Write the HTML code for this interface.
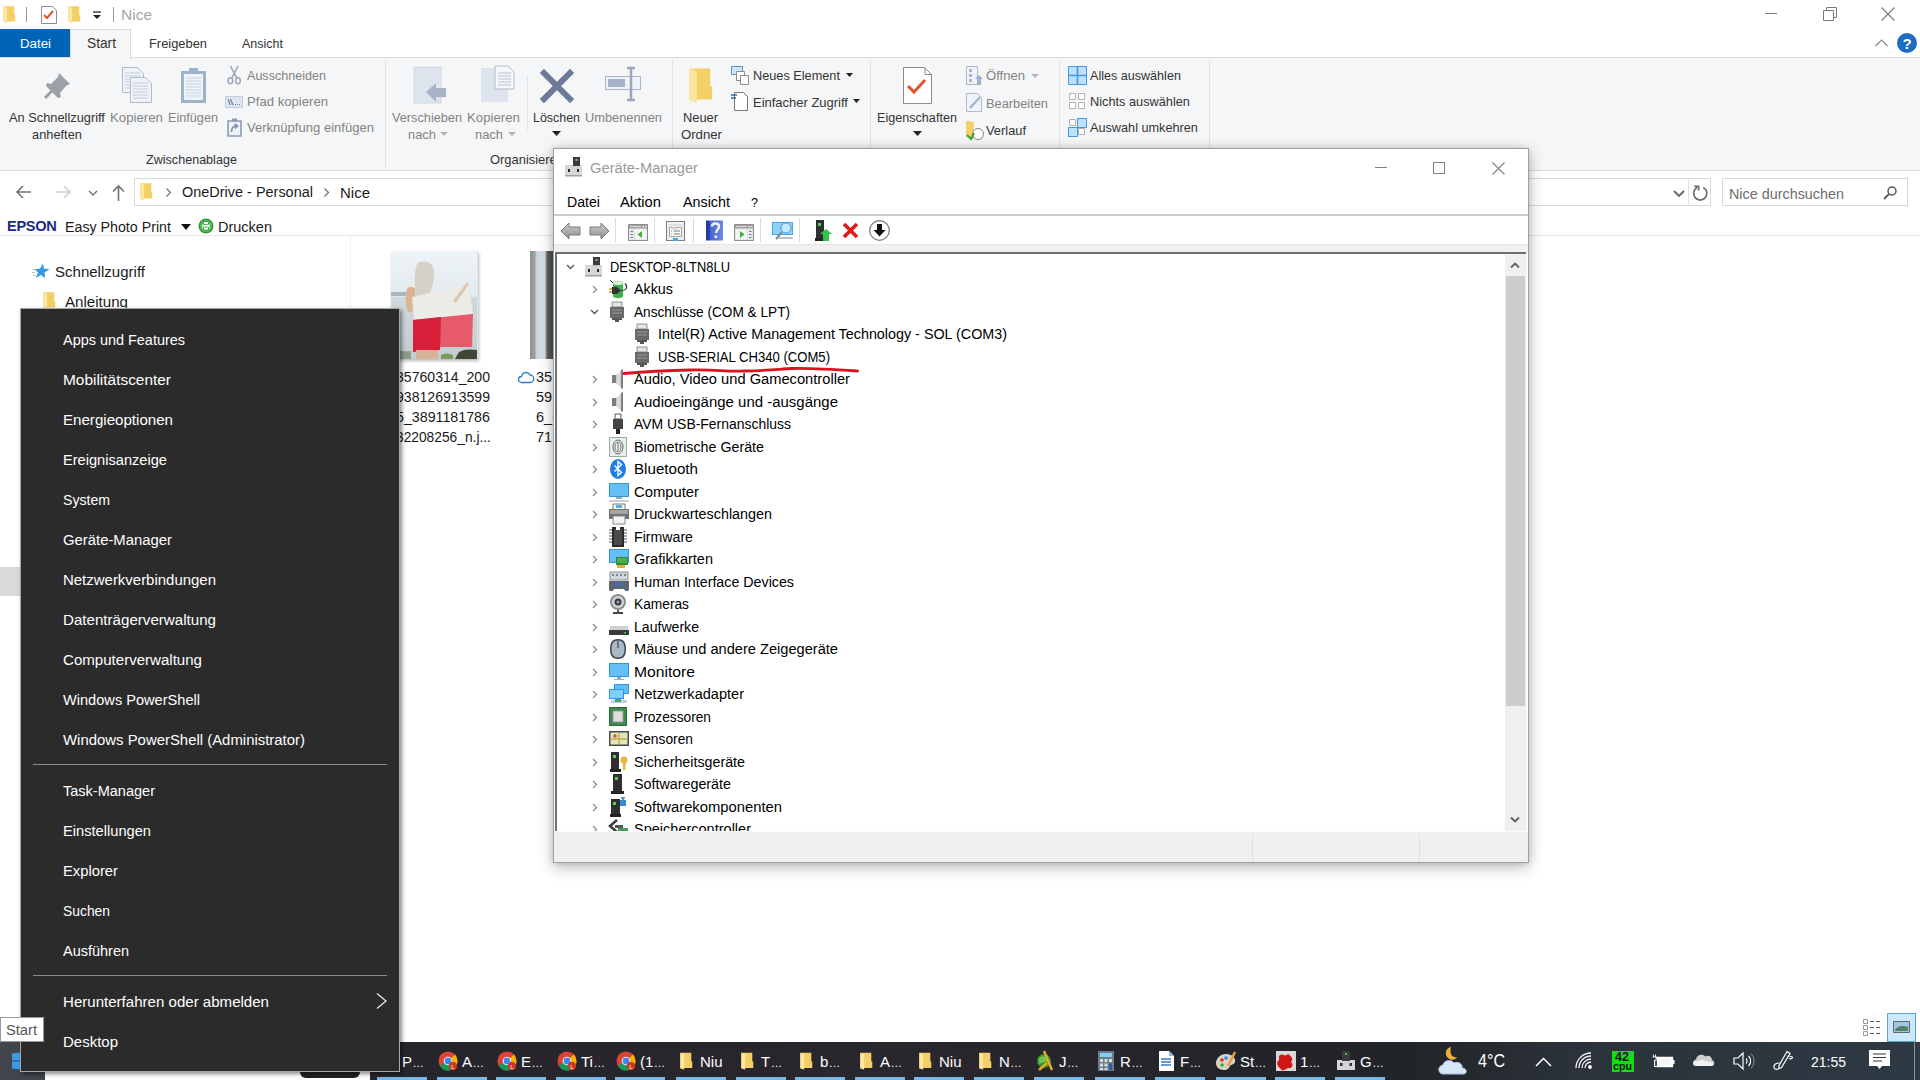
<!DOCTYPE html>
<html><head><meta charset="utf-8">
<style>
*{margin:0;padding:0;box-sizing:border-box}
html,body{width:1920px;height:1080px;overflow:hidden;background:#fff;font-family:"Liberation Sans",sans-serif;color:#000}
.a{position:absolute}
.t{position:absolute;white-space:nowrap;line-height:1}
svg.i{position:absolute;overflow:visible}
</style></head><body>

<div id="explorer"><svg class="i" style="left:3px;top:6px;" width="13" height="17" viewBox="0 0 13 17"><path d="M0.3 0.3h11v8.7h1v6.5h-8.5v1.5l-3.5-1.3z" fill="#f3cf67"/><path d="M0.3 0.3l3.9 1.3v15.4l-3.9-1.3z" fill="#fde6a0"/></svg>
<div class="a" style="left:26px;top:7px;width:1px;height:15px;background:#9a9a9a;"></div>
<svg class="i" style="left:41px;top:6px;" width="16" height="18" viewBox="0 0 16 18"><path d="M0.5 0.5h11l4 4v13h-15z" fill="#fff" stroke="#8c8c8c"/><path d="M3 9l3 3 6-7" fill="none" stroke="#e0552b" stroke-width="2"/></svg>
<svg class="i" style="left:68px;top:6px;" width="13" height="17" viewBox="0 0 13 17"><path d="M0.3 0.3h11v8.7h1v6.5h-8.5v1.5l-3.5-1.3z" fill="#f3cf67"/><path d="M0.3 0.3l3.9 1.3v15.4l-3.9-1.3z" fill="#fde6a0"/></svg>
<svg class="i" style="left:92px;top:11px;" width="10" height="9" viewBox="0 0 10 9"><path d="M1 1h8" stroke="#222" stroke-width="1.3"/><path d="M1 4h8l-4 4z" fill="#222"/></svg>
<div class="a" style="left:113px;top:7px;width:1px;height:15px;background:#9a9a9a;"></div>
<div class="t" style="left:121.0px;top:7.00px;font-size:15.50px;color:#a6a6a6;">Nice</div>
<div class="a" style="left:1765px;top:13px;width:12px;height:1px;background:#7a7a7a;"></div>
<svg class="i" style="left:1823px;top:7px;" width="14" height="14" viewBox="0 0 14 14"><path d="M0.5 3.5h10v10h-10z" fill="none" stroke="#7a7a7a"/><path d="M3.5 3.5v-3h10v10h-3" fill="none" stroke="#7a7a7a"/></svg>
<svg class="i" style="left:1881px;top:7px;" width="14" height="14" viewBox="0 0 14 14"><path d="M0.5 0.5l13 13M13.5 0.5l-13 13" stroke="#7a7a7a" stroke-width="1.1"/></svg>
<div class="a" style="left:0px;top:57px;width:1920px;height:114px;background:#f5f6f7;border-top:1px solid #dadbdc;border-bottom:1px solid #dadbdc"></div>
<div class="a" style="left:0px;top:29px;width:70px;height:28px;background:#0064b4;"></div>
<div class="t" style="left:20.0px;top:37.00px;font-size:13.28px;color:#fff;">Datei</div>
<div class="a" style="left:70px;top:29px;width:61px;height:30px;background:#f5f6f7;border:1px solid #dadbdc;border-bottom:none"></div>
<div class="t" style="left:87.0px;top:37.00px;font-size:13.73px;color:#333;">Start</div>
<div class="t" style="left:149.0px;top:38.00px;font-size:12.88px;color:#333;">Freigeben</div>
<div class="t" style="left:242.0px;top:38.00px;font-size:12.50px;color:#333;">Ansicht</div>
<svg class="i" style="left:1875px;top:39px;" width="13" height="8" viewBox="0 0 13 8"><path d="M0.5 7l6-6 6 6" fill="none" stroke="#888" stroke-width="1.2"/></svg>
<svg class="i" style="left:1897px;top:33px;" width="20" height="20" viewBox="0 0 20 20"><circle cx="10" cy="10" r="10" fill="#1a6cc4"/><text x="10" y="15.5" text-anchor="middle" font-family="Liberation Sans" font-weight="bold" font-size="15" fill="#fff">?</text></svg>
<svg class="i" style="left:43px;top:71px;" width="29" height="29" viewBox="0 0 29 29"><path d="M16 2 L27 13 L23 15 L17 22 L18 26 L15 27 L3 15 L4 12 L8 13 L15 6 Z" fill="#9aa1a8"/><path d="M9 20 L2 27" stroke="#9aa1a8" stroke-width="3"/></svg>
<div class="t" style="left:9.0px;top:112.00px;font-size:12.82px;color:#333;">An Schnellzugriff</div>
<div class="t" style="left:32.0px;top:129.00px;font-size:12.84px;color:#333;">anheften</div>
<svg class="i" style="left:122px;top:67px;" width="22" height="26" viewBox="0 0 22 26"><path d="M0.5 0.5h15l6 6v19h-21z" fill="#eef2f9" stroke="#b2bbc9"/><path d="M3 6h15" stroke="#c4cdd9"/><path d="M3 9h15" stroke="#c4cdd9"/><path d="M3 12h15" stroke="#c4cdd9"/><path d="M3 15h15" stroke="#c4cdd9"/><path d="M3 18h15" stroke="#c4cdd9"/><path d="M3 21h15" stroke="#c4cdd9"/></svg>
<svg class="i" style="left:130px;top:77px;" width="22" height="26" viewBox="0 0 22 26"><path d="M0.5 0.5h15l6 6v19h-21z" fill="#eef2f9" stroke="#b2bbc9"/><path d="M3 6h15" stroke="#c4cdd9"/><path d="M3 9h15" stroke="#c4cdd9"/><path d="M3 12h15" stroke="#c4cdd9"/><path d="M3 15h15" stroke="#c4cdd9"/><path d="M3 18h15" stroke="#c4cdd9"/><path d="M3 21h15" stroke="#c4cdd9"/></svg>
<div class="t" style="left:110.0px;top:111.00px;font-size:13.24px;color:#838383;">Kopieren</div>
<svg class="i" style="left:180px;top:66px;" width="27" height="38" viewBox="0 0 27 38"><path d="M1 5h25v32h-25z" fill="#9fb2cc"/><path d="M4 8h19v26h-19z" fill="#eef2f9"/><path d="M9 2h9v6h-9z" fill="#9fb2cc"/><path d="M6 12h15" stroke="#c8d2df"/><path d="M6 15h15" stroke="#c8d2df"/><path d="M6 18h15" stroke="#c8d2df"/><path d="M6 21h15" stroke="#c8d2df"/><path d="M6 24h15" stroke="#c8d2df"/><path d="M6 27h15" stroke="#c8d2df"/><path d="M6 30h15" stroke="#c8d2df"/></svg>
<div class="t" style="left:168.0px;top:112.00px;font-size:12.66px;color:#838383;">Einfügen</div>
<svg class="i" style="left:227px;top:65px;" width="15" height="20" viewBox="0 0 15 20"><path d="M3.5 1L10 13.5M11 1L4.5 13.5" stroke="#9ba6b8" stroke-width="1.6"/><ellipse cx="3.4" cy="15.8" rx="2.3" ry="3" fill="none" stroke="#9ba6b8" stroke-width="1.5"/><ellipse cx="11" cy="15.8" rx="2.3" ry="3" fill="none" stroke="#9ba6b8" stroke-width="1.5"/></svg>
<div class="t" style="left:247.0px;top:70.00px;font-size:12.57px;color:#838383;">Ausschneiden</div>
<svg class="i" style="left:225px;top:96px;" width="18" height="12" viewBox="0 0 18 12"><path d="M0.5 0.5h17v11h-17z" fill="#dfe6f0" stroke="#c2cbd8"/><path d="M3 3l2.5 6M5.5 3l2.5 6" stroke="#6b7a92" stroke-width="1.1"/><path d="M10 8.5h1M12 8.5h1M14 8.5h1" stroke="#6b7a92" stroke-width="1"/></svg>
<div class="t" style="left:247.0px;top:95.00px;font-size:13.13px;color:#838383;">Pfad kopieren</div>
<svg class="i" style="left:227px;top:117px;" width="15" height="20" viewBox="0 0 15 20"><path d="M1 4h13v15h-13z" fill="#eef2f9" stroke="#8d9cb4" stroke-width="1.6"/><path d="M5 1.5h5v3h-5z" fill="#8d9cb4"/><path d="M4.5 15c0-4 2-6 5-6M7.5 7l3 2-2.5 2.5" fill="none" stroke="#7c8ea8" stroke-width="1.6"/></svg>
<div class="t" style="left:247.0px;top:121.00px;font-size:13.05px;color:#838383;">Verknüpfung einfügen</div>
<div class="t" style="left:146.0px;top:154.00px;font-size:12.59px;color:#333;">Zwischenablage</div>
<div class="a" style="left:385px;top:60px;width:1px;height:108px;background:#e2e3e4;"></div>
<div class="a" style="left:672px;top:60px;width:1px;height:108px;background:#e2e3e4;"></div>
<div class="a" style="left:870px;top:60px;width:1px;height:108px;background:#e2e3e4;"></div>
<div class="a" style="left:1059px;top:60px;width:1px;height:108px;background:#e2e3e4;"></div>
<div class="a" style="left:1209px;top:60px;width:1px;height:108px;background:#e2e3e4;"></div>
<div class="a" style="left:527px;top:75px;width:1px;height:55px;background:#e2e3e4;"></div>
<svg class="i" style="left:414px;top:67px;" width="34" height="38" viewBox="0 0 34 38"><path d="M0 0h27v36h-27z" fill="#dde4ee" stroke="#c9d3e0" stroke-width="0.8"/><path d="M12 25 L22 16 L22 21 L32 21 L32 30 L22 30 L22 35Z" fill="#a7b4c6"/></svg>
<div class="t" style="left:392.0px;top:112.00px;font-size:12.72px;color:#838383;">Verschieben</div>
<div class="t" style="left:408.0px;top:129.00px;font-size:12.91px;color:#838383;">nach</div>
<svg class="i" style="left:440px;top:132px;" width="8" height="4" viewBox="0 0 8 4"><path d="M0 0h8l-4 4z" fill="#b5b5b5"/></svg>
<svg class="i" style="left:481px;top:66px;" width="34" height="36" viewBox="0 0 34 36"><path d="M0 2h27v34h-27z" fill="#dde4ee"/><path d="M14 0h13l6 6v17h-19z" fill="#f4f7fb" stroke="#b2bbc9"/><path d="M17 7h13" stroke="#b7c1cf"/><path d="M17 10h13" stroke="#b7c1cf"/><path d="M17 13h13" stroke="#b7c1cf"/><path d="M17 16h13" stroke="#b7c1cf"/><path d="M17 19h13" stroke="#b7c1cf"/></svg>
<div class="t" style="left:467.0px;top:111.00px;font-size:13.24px;color:#838383;">Kopieren</div>
<div class="t" style="left:475.0px;top:129.00px;font-size:12.91px;color:#838383;">nach</div>
<svg class="i" style="left:508px;top:132px;" width="8" height="4" viewBox="0 0 8 4"><path d="M0 0h8l-4 4z" fill="#b5b5b5"/></svg>
<svg class="i" style="left:541px;top:70px;" width="32" height="32" viewBox="0 0 32 32"><path d="M3 3 L29 29 M29 3 L3 29" stroke="#6b7a99" stroke-width="6" stroke-linecap="square"/></svg>
<div class="t" style="left:533.0px;top:112.00px;font-size:12.43px;color:#333;">Löschen</div>
<svg class="i" style="left:552px;top:131px;" width="9" height="5" viewBox="0 0 9 5"><path d="M0 0h9l-4.5 5z" fill="#222"/></svg>
<svg class="i" style="left:605px;top:67px;" width="38" height="34" viewBox="0 0 38 34"><path d="M0.5 9.5h35v13h-35z" fill="#eef2f9" stroke="#aab6c8"/><path d="M3 12h17v8h-17z" fill="#a3b2c8"/><path d="M22 1h8M26 1v32M22 33h8" fill="none" stroke="#97a6bd" stroke-width="2.5"/></svg>
<div class="t" style="left:585.0px;top:112.00px;font-size:12.82px;color:#838383;">Umbenennen</div>
<div class="t" style="left:490.0px;top:154.00px;font-size:12.93px;color:#333;">Organisieren</div>
<svg class="i" style="left:689px;top:68px;" width="24" height="35" viewBox="0 0 24 35"><g transform="scale(1.88,2.04)"><path d="M0.3 0.3h11v8.7h1v6.5h-8.5v1.5l-3.5-1.3z" fill="#f3cf67"/><path d="M0.3 0.3l3.9 1.3v15.4l-3.9-1.3z" fill="#fde6a0"/></g></svg>
<div class="t" style="left:683.0px;top:112.00px;font-size:12.85px;color:#333;">Neuer</div>
<div class="t" style="left:681.0px;top:128.00px;font-size:13.17px;color:#333;">Ordner</div>
<svg class="i" style="left:731px;top:66px;" width="18" height="19" viewBox="0 0 18 19"><path d="M0.5 0.5h11v8h-11z" fill="#cfe3f5" stroke="#5b8fc7"/><path d="M5.5 5.5h8v9h-8z" fill="#fff" stroke="#8c8c8c"/><path d="M9.5 9.5h8v9h-8z" fill="#fff" stroke="#8c8c8c"/></svg>
<div class="t" style="left:753.0px;top:70.00px;font-size:12.72px;color:#333;">Neues Element</div>
<svg class="i" style="left:846px;top:73px;" width="7" height="4" viewBox="0 0 7 4"><path d="M0 0h7l-3.5 4z" fill="#222"/></svg>
<svg class="i" style="left:731px;top:92px;" width="17" height="19" viewBox="0 0 17 19"><path d="M3.5 0.5h9l4 4v14h-13z" fill="#fff" stroke="#777"/><path d="M0 3h6M0 6h5" stroke="#2c6fb7" stroke-width="1.3"/></svg>
<div class="t" style="left:753.0px;top:96.00px;font-size:12.98px;color:#333;">Einfacher Zugriff</div>
<svg class="i" style="left:853px;top:99px;" width="7" height="4" viewBox="0 0 7 4"><path d="M0 0h7l-3.5 4z" fill="#222"/></svg>
<svg class="i" style="left:903px;top:67px;" width="29" height="37" viewBox="0 0 29 37"><path d="M0.5 0.5h21l7 7v29h-28z" fill="#fff" stroke="#8c8c8c"/><path d="M22 0.5v7h7" fill="none" stroke="#8c8c8c"/><path d="M5 19l6 6 11-12" fill="none" stroke="#e0552b" stroke-width="3"/></svg>
<div class="t" style="left:877.0px;top:112.00px;font-size:12.62px;color:#333;">Eigenschaften</div>
<svg class="i" style="left:913px;top:131px;" width="9" height="5" viewBox="0 0 9 5"><path d="M0 0h9l-4.5 5z" fill="#222"/></svg>
<svg class="i" style="left:966px;top:66px;" width="17" height="20" viewBox="0 0 17 20"><path d="M0.5 0.5h11v18h-11z" fill="#eef2f9" stroke="#a9b6c8"/><path d="M3 3h3v3h-3zM3 8h3v3h-3zM3 13h3v3h-3z" fill="#a9b6c8"/><path d="M13 9 L17 13 L15 13 L15 19 L11 19 L11 13 L9 13Z" fill="#9fb0c8"/></svg>
<div class="t" style="left:986.0px;top:69.00px;font-size:13.07px;color:#838383;">Öffnen</div>
<svg class="i" style="left:1031px;top:74px;" width="8" height="4" viewBox="0 0 8 4"><path d="M0 0h8l-4 4z" fill="#b5b5b5"/></svg>
<svg class="i" style="left:966px;top:93px;" width="17" height="19" viewBox="0 0 17 19"><path d="M0.5 0.5h11l4 4v14h-15z" fill="#eef2f9" stroke="#b2bbc9"/><path d="M4 15 L14 4" stroke="#9fb0c8" stroke-width="2"/></svg>
<div class="t" style="left:986.0px;top:98.00px;font-size:12.82px;color:#838383;">Bearbeiten</div>
<svg class="i" style="left:966px;top:121px;" width="18" height="20" viewBox="0 0 18 20"><path d="M0 0 L8 1 L8 18 L0 16Z" fill="#f3d06a"/><circle cx="12" cy="13" r="5.5" fill="#fff" stroke="#888"/><path d="M1 14 L5 18 L8 12" fill="none" stroke="#3aa33a" stroke-width="2"/></svg>
<div class="t" style="left:986.0px;top:125.00px;font-size:12.85px;color:#333;">Verlauf</div>
<svg class="i" style="left:1068px;top:66px;" width="19" height="19" viewBox="0 0 19 19"><path d="M0.5 0.5h18v18h-18z" fill="#bfe0f9" stroke="#3f9ae2"/><path d="M9.5 0.5v18M0.5 9.5h18" stroke="#3f9ae2" stroke-width="1.6"/></svg>
<div class="t" style="left:1090.0px;top:70.00px;font-size:12.59px;color:#333;">Alles auswählen</div>
<svg class="i" style="left:1069px;top:93px;" width="17" height="17" viewBox="0 0 17 17"><path d="M0.5 0.5h6v6h-6zM9.5 0.5h6v6h-6zM0.5 9.5h6v6h-6zM9.5 9.5h6v6h-6z" fill="#fff" stroke="#b0b0b0"/></svg>
<div class="t" style="left:1090.0px;top:96.00px;font-size:12.76px;color:#333;">Nichts auswählen</div>
<svg class="i" style="left:1068px;top:118px;" width="19" height="19" viewBox="0 0 19 19"><path d="M1.5 1.5h6v6h-6zM10.5 10.5h6v6h-6z" fill="#fff" stroke="#b0b0b0"/><path d="M9.5 0.5h9v9h-9zM0.5 9.5h9v9h-9z" fill="#bfe0f9" stroke="#3f9ae2"/></svg>
<div class="t" style="left:1090.0px;top:122.00px;font-size:12.70px;color:#333;">Auswahl umkehren</div>
<svg class="i" style="left:16px;top:185px;" width="16" height="14" viewBox="0 0 16 14"><path d="M15 7H1M7 1L1 7l6 6" fill="none" stroke="#737373" stroke-width="1.6"/></svg>
<svg class="i" style="left:55px;top:185px;" width="16" height="14" viewBox="0 0 16 14"><path d="M1 7h14M9 1l6 6-6 6" fill="none" stroke="#cfcfcf" stroke-width="1.6"/></svg>
<svg class="i" style="left:88px;top:190px;" width="10" height="6" viewBox="0 0 10 6"><path d="M1 1l4 4 4-4" fill="none" stroke="#707070" stroke-width="1.4"/></svg>
<svg class="i" style="left:112px;top:185px;" width="13" height="16" viewBox="0 0 13 16"><path d="M6.5 16V1M1 6.5l5.5-5.5 5.5 5.5" fill="none" stroke="#737373" stroke-width="1.6"/></svg>
<div class="a" style="left:134px;top:178px;width:1577px;height:28px;background:#fff;border:1px solid #d9d9d9"></div>
<svg class="i" style="left:140px;top:183px;" width="13" height="17" viewBox="0 0 13 17"><path d="M0.3 0.3h11v8.7h1v6.5h-8.5v1.5l-3.5-1.3z" fill="#f3cf67"/><path d="M0.3 0.3l3.9 1.3v15.4l-3.9-1.3z" fill="#fde6a0"/></svg>
<svg class="i" style="left:166px;top:188px;" width="5" height="9" viewBox="0 0 5 9"><path d="M0.5 0.5l4 4-4 4" fill="none" stroke="#707070" stroke-width="1.2"/></svg>
<div class="t" style="left:182.0px;top:185.00px;font-size:14.46px;color:#1a1a1a;">OneDrive - Personal</div>
<svg class="i" style="left:324px;top:188px;" width="5" height="9" viewBox="0 0 5 9"><path d="M0.5 0.5l4 4-4 4" fill="none" stroke="#707070" stroke-width="1.2"/></svg>
<div class="t" style="left:340.0px;top:185.00px;font-size:15.00px;color:#1a1a1a;">Nice</div>
<svg class="i" style="left:1673px;top:190px;" width="12" height="7" viewBox="0 0 12 7"><path d="M1 1l5 5 5-5" fill="none" stroke="#666" stroke-width="1.9"/></svg>
<div class="a" style="left:1688px;top:179px;width:1px;height:26px;background:#e3e3e3;"></div>
<svg class="i" style="left:1691px;top:184px;" width="18" height="18" viewBox="0 0 18 18"><path d="M12.3 3.6 A6.6 6.6 0 1 1 6.2 3.6" fill="none" stroke="#6b6b6b" stroke-width="1.7"/><path d="M3.2 2.3H7.6V6.6" fill="none" stroke="#6b6b6b" stroke-width="1.7"/></svg>
<div class="a" style="left:1722px;top:178px;width:186px;height:28px;background:#fff;border:1px solid #d9d9d9"></div>
<div class="t" style="left:1729.0px;top:187.00px;font-size:14.37px;color:#6d6d6d;">Nice durchsuchen</div>
<svg class="i" style="left:1883px;top:186px;" width="14" height="14" viewBox="0 0 14 14"><circle cx="9" cy="5" r="4" fill="none" stroke="#555" stroke-width="1.5"/><path d="M6 8L1 13" stroke="#555" stroke-width="1.8"/></svg>
<div class="t" style="left:7.0px;top:219.00px;font-size:14.57px;color:#1c2a87;font-weight:bold;letter-spacing:-0.3px">EPSON</div>
<div class="t" style="left:65.0px;top:220.00px;font-size:14.23px;color:#1a1a1a;">Easy Photo Print</div>
<svg class="i" style="left:181px;top:224px;" width="10" height="6" viewBox="0 0 10 6"><path d="M0 0h10l-5 6z" fill="#111"/></svg>
<svg class="i" style="left:198px;top:218px;" width="16" height="16" viewBox="0 0 16 16"><circle cx="8" cy="8" r="7.5" fill="#2e9b3a"/><circle cx="8" cy="8" r="6" fill="#54c35a"/><path d="M4.5 6h7v5h-7z" fill="#fff"/><path d="M5.5 3.5h5v3h-5zM5.5 9h5v3h-5z" fill="#fff" stroke="#2e9b3a" stroke-width="0.8"/></svg>
<div class="t" style="left:218.0px;top:220.00px;font-size:14.50px;color:#1a1a1a;">Drucken</div>
<div class="a" style="left:0px;top:235px;width:1920px;height:1px;background:#e5e5e5;"></div>
<div class="a" style="left:350px;top:236px;width:1px;height:806px;background:#f0f0f0;"></div>
<svg class="i" style="left:32px;top:263px;" width="20" height="17" viewBox="0 0 20 17"><path d="M10.94 0.50 L11.99 5.75 L17.55 6.03 L12.54 9.55 L13.04 14.97 L8.89 11.90 L3.63 14.97 L6.08 9.55 L2.34 6.03 L8.00 5.75Z" fill="#3a96e6"/><path d="M0.5 6.5h3M0 9.5h3M1 12.5h2.5" stroke="#8cc4f2" stroke-width="0.9"/></svg>
<div class="t" style="left:55.0px;top:264.00px;font-size:15.04px;color:#1a1a1a;">Schnellzugriff</div>
<svg class="i" style="left:43px;top:292px;" width="13" height="17" viewBox="0 0 13 17"><path d="M0.3 0.3h11v8.7h1v6.5h-8.5v1.5l-3.5-1.3z" fill="#f3cf67"/><path d="M0.3 0.3l3.9 1.3v15.4l-3.9-1.3z" fill="#fde6a0"/></svg>
<div class="t" style="left:65.0px;top:294.00px;font-size:15.11px;color:#1a1a1a;">Anleitung</div>
<div class="a" style="left:0px;top:567px;width:20px;height:29px;background:#d9d9d9;"></div>
<div class="a" style="left:391px;top:251px;width:87px;height:108px;background:#dce6eb;box-shadow:1px 2px 3px rgba(0,0,0,0.28)"></div>
<svg class="i" style="left:391px;top:251px;" width="86" height="108" viewBox="0 0 86 108"><defs><linearGradient id="sky" x1="0" y1="0" x2="0" y2="1"><stop offset="0" stop-color="#eef4f7"/><stop offset="0.42" stop-color="#e2eaee"/><stop offset="0.43" stop-color="#cfd9de"/><stop offset="1" stop-color="#c3cccf"/></linearGradient></defs><path d="M0 0h86v108h-86z" fill="url(#sky)"/><path d="M0 41h18v4h-18z" fill="#a9b9bf"/><path d="M16 38c2-3 6-3 8 0l1 22-8 1c-3-8-3-16-1-23z" fill="#d9b392"/><path d="M26 13c5-4 13-3 16 3 2 8 0 18-3 26l-14 3c-2-10-2-23 1-32z" fill="#d6d1c6"/><path d="M21 46 L78 34 L82 63 L23 69Z" fill="#ecebe6"/><path d="M62 50 L76 31 L78 33 L65 52Z" fill="#dcc6b2"/><path d="M23 69 L82 63 L81 96 L49 96 L22 99Z" fill="#e65a6c"/><path d="M22 69 L50 66 L49 99 L22 101Z" fill="#d81f3a"/><path d="M25 99h22v9h-22z" fill="#d8b296"/><path d="M68 101c5-3 11-3 18-2v9h-22z" fill="#3f4a36"/><path d="M50 104c4-2 8-2 12 0v4h-12z" fill="#7c9a5a"/><path d="M0 100c6-1 12 1 20 0v8h-20z" fill="#8e9a88"/></svg>
<div class="a" style="left:530px;top:251px;width:24px;height:108px;background:linear-gradient(90deg,#8c918f 0%,#9ea3a1 20%,#cdd6de 28%,#d6dee6 62%,#5d6163 72%,#4a4d4f 100%);"></div>
<div class="t" style="left:396.0px;top:370.00px;font-size:14.08px;color:#1a1a1a;">35760314_200</div>
<div class="t" style="left:536.0px;top:370.00px;font-size:14.50px;color:#1a1a1a;">35</div>
<div class="t" style="left:396.0px;top:390.00px;font-size:14.08px;color:#1a1a1a;">938126913599</div>
<div class="t" style="left:536.0px;top:390.00px;font-size:14.50px;color:#1a1a1a;">59</div>
<div class="t" style="left:396.0px;top:410.00px;font-size:14.24px;color:#1a1a1a;">5_3891181786</div>
<div class="t" style="left:536.0px;top:410.00px;font-size:14.50px;color:#1a1a1a;">6_6</div>
<div class="t" style="left:396.0px;top:431.00px;font-size:13.78px;color:#1a1a1a;">32208256_n.j...</div>
<div class="t" style="left:536.0px;top:430.00px;font-size:14.50px;color:#1a1a1a;">71</div>
<svg class="i" style="left:518px;top:371px;" width="15" height="12" viewBox="0 0 15 12"><path d="M3.5 11.5a3 3 0 0 1 0-6 4.5 4.5 0 0 1 8.5-1.5 3.5 3.5 0 0 1 0 7.5z" fill="none" stroke="#2a7ad2" stroke-width="1.3"/></svg>
<svg class="i" style="left:1863px;top:1019px;" width="18" height="17" viewBox="0 0 18 17"><path d="M0.5 0.5h4v4h-4zM0.5 6.5h4v4h-4zM0.5 12.5h4v4h-4z" fill="#fff" stroke="#999"/><path d="M7 2.5h4M13 2.5h4M7 8.5h4M13 8.5h4M7 14.5h4M13 14.5h4" stroke="#555"/></svg>
<div class="a" style="left:1887px;top:1013px;width:29px;height:29px;background:#cce8ff;border:1px solid #5aa5d8"></div>
<svg class="i" style="left:1893px;top:1021px;" width="17" height="12" viewBox="0 0 17 12"><path d="M0.5 0.5h16v11h-16z" fill="#9cc7df" stroke="#666"/><path d="M2 9c3-4 6-5 13-3v4h-13z" fill="#5b7f60"/></svg></div>
<div class="a" style="left:553px;top:148px;width:976px;height:715px;background:#fff;border:1px solid #a0a0a0;box-shadow:0 4px 14px rgba(0,0,0,0.28), 0 0 6px rgba(0,0,0,0.12)"></div>
<svg class="i" style="left:565px;top:157px;" width="18" height="20" viewBox="0 0 18 20"><path d="M0 8h17v11h-17z" fill="#d6d6d6"/><path d="M0 18h17v1.5h-17z" fill="#a0a0a0"/><path d="M3 12h2v3h-2zM12 12h2v3h-2z" fill="#2a2a2a"/><path d="M8 0h7v9h-7z" fill="#3b3b3b"/><path d="M10.5 2h2v2h-2z" fill="#7bc47b"/></svg>
<div class="t" style="left:590.0px;top:161.00px;font-size:14.72px;color:#9a9a9a;">Geräte-Manager</div>
<div class="a" style="left:1375px;top:167px;width:12px;height:1px;background:#808080;"></div>
<div class="a" style="left:1433px;top:162px;width:12px;height:12px;background:transparent;border:1px solid #808080"></div>
<svg class="i" style="left:1492px;top:162px;" width="13" height="13" viewBox="0 0 13 13"><path d="M0.5 0.5l12 12M12.5 0.5l-12 12" stroke="#808080" stroke-width="1.1"/></svg>
<div class="t" style="left:567.0px;top:195.00px;font-size:14.14px;color:#000;">Datei</div>
<div class="t" style="left:620.0px;top:195.00px;font-size:14.75px;color:#000;">Aktion</div>
<div class="t" style="left:683.0px;top:195.00px;font-size:14.33px;color:#000;">Ansicht</div>
<div class="t" style="left:751.0px;top:197.00px;font-size:12.59px;color:#000;">?</div>
<div class="a" style="left:554px;top:214px;width:974px;height:2px;background:#cdcdcd;"></div>
<div class="a" style="left:554px;top:244px;width:974px;height:8px;background:#f0f0f0;border-top:1px solid #e6e6e6"></div>
<svg class="i" style="left:560px;top:221px;" width="21" height="20" viewBox="0 0 21 20"><defs><linearGradient id="ga" x1="0" y1="0" x2="0" y2="1"><stop offset="0" stop-color="#cfcfcf"/><stop offset="1" stop-color="#8d8d8d"/></linearGradient></defs><path d="M1 10 L9 2 L9 6 L20 6 L20 14 L9 14 L9 18Z" fill="url(#ga)" stroke="#7a7a7a" stroke-width="1"/></svg>
<svg class="i" style="left:589px;top:221px;" width="21" height="20" viewBox="0 0 21 20"><path d="M20 10 L12 2 L12 6 L1 6 L1 14 L12 14 L12 18Z" fill="url(#gb)" stroke="#7a7a7a" stroke-width="1"/><defs><linearGradient id="gb" x1="0" y1="0" x2="0" y2="1"><stop offset="0" stop-color="#cfcfcf"/><stop offset="1" stop-color="#8d8d8d"/></linearGradient></defs></svg>
<div class="a" style="left:615px;top:218px;width:1px;height:25px;background:#dcdcdc;"></div>
<div class="a" style="left:654px;top:218px;width:1px;height:25px;background:#dcdcdc;"></div>
<div class="a" style="left:693px;top:218px;width:1px;height:25px;background:#dcdcdc;"></div>
<div class="a" style="left:760px;top:218px;width:1px;height:25px;background:#dcdcdc;"></div>
<div class="a" style="left:799px;top:218px;width:1px;height:25px;background:#dcdcdc;"></div>
<svg class="i" style="left:628px;top:224px;" width="20" height="17" viewBox="0 0 20 17"><path d="M0.5 0.5h19v16h-19z" fill="#f2f2f2" stroke="#8d8d8d"/><path d="M1 1h18v3.5h-18z" fill="#9c9c9c"/><path d="M2 2h11v1h-11z" fill="#dcdcdc"/><path d="M14.5 1.8h1.5v1.5h-1.5zM17 1.8h1.5v1.5h-1.5z" fill="#eee"/><path d="M1 5h18v11h-18z" fill="#d9dde2"/><path d="M7 5.5h11.5v10h-11.5z" fill="#f4f6f4"/><path d="M1.5 5.5h4.5v10h-4.5z" fill="#e8edf3"/><path d="M2.5 7.5h2.5M2.5 10.5h2.5M2.5 13.5h2.5" stroke="#5b7896" stroke-width="1"/><path d="M14 7 L9.5 10.5 L14 14Z" fill="#44b03c"/></svg>
<svg class="i" style="left:666px;top:221px;" width="20" height="20" viewBox="0 0 20 20"><path d="M0.5 0.5h18v19h-18z" rx="2" fill="#f0f0f0" stroke="#7f7f7f" stroke-width="1.1"/><path d="M3 3h13v2h-13z" fill="#dedede"/><path d="M3.5 6.5h12v9h-12z" fill="#fafafa" stroke="#a5a5a5"/><path d="M6 6.5h6v2h-6z" fill="#d6d6d6"/><path d="M5 10h1M5 13h1" stroke="#7a90a8"/><path d="M7.5 10h6.5M7.5 13h6.5" stroke="#a6a6a6" stroke-width="1.3"/><path d="M7 17h5v3h-5z" fill="#3ab0dc"/></svg>
<svg class="i" style="left:706px;top:220px;" width="18" height="21" viewBox="0 0 18 21"><defs><linearGradient id="hq" x1="0" y1="0" x2="1" y2="0"><stop offset="0" stop-color="#23399a"/><stop offset="0.22" stop-color="#2a43a8"/><stop offset="0.25" stop-color="#4a66cf"/><stop offset="1" stop-color="#6f88e0"/></linearGradient></defs><path d="M0 0.5h17v20h-17z" fill="url(#hq)"/><path d="M6 6.5c0-4 7-4 7 0 0 3-3 3.5-3 6.5" fill="none" stroke="#f0f3ff" stroke-width="2.4"/><path d="M8.6 15.5h2.6v2.6h-2.6z" fill="#f0f3ff"/></svg>
<svg class="i" style="left:734px;top:224px;" width="20" height="17" viewBox="0 0 20 17"><path d="M0.5 0.5h19v16h-19z" fill="#f2f2f2" stroke="#8d8d8d"/><path d="M1 1h18v3.5h-18z" fill="#9c9c9c"/><path d="M2 2h11v1h-11z" fill="#dcdcdc"/><path d="M14.5 1.8h1.5v1.5h-1.5zM17 1.8h1.5v1.5h-1.5z" fill="#eee"/><path d="M1 5h18v11h-18z" fill="#d9dde2"/><path d="M1.5 5.5h11.5v10h-11.5z" fill="#f4f6f4"/><path d="M14 5.5h4.5v10h-4.5z" fill="#e8edf3"/><path d="M15 7.5h2.5M15 10.5h2.5M15 13.5h2.5" stroke="#5b7896" stroke-width="1"/><path d="M6 7 L10.5 10.5 L6 14Z" fill="#44b03c"/></svg>
<svg class="i" style="left:772px;top:220px;" width="22" height="21" viewBox="0 0 22 21"><path d="M0 2h21v13h-21z" fill="#44a8e6"/><path d="M1 3h19v11h-19z" fill="#8fd0f4"/><circle cx="14" cy="8" r="5" fill="#c7e9fb" stroke="#4aa0d8"/><path d="M10 12 L4 19" stroke="#7a8a99" stroke-width="2"/><path d="M6 18h15" stroke="#b8c4cc" stroke-width="2"/></svg>
<svg class="i" style="left:815px;top:220px;" width="18" height="21" viewBox="0 0 18 21"><path d="M1 0h8v19h-8z" fill="#2f2f2f"/><path d="M0 18h11v3h-11z" fill="#222"/><path d="M3 3h3v3h-3z" fill="#52d152"/><path d="M11 9 L17 14 L14 14 L14 21 L8 21 L8 14 L5 14Z" fill="#35c44a"/></svg>
<svg class="i" style="left:842px;top:222px;" width="17" height="17" viewBox="0 0 17 17"><path d="M2 2 L15 15 M15 2 L2 15" stroke="#e01b1b" stroke-width="3.6"/></svg>
<svg class="i" style="left:869px;top:220px;" width="21" height="21" viewBox="0 0 21 21"><circle cx="10.5" cy="10.5" r="9.8" fill="#fff" stroke="#777" stroke-width="1.2"/><path d="M8 4h5v6h3.5l-6 6.5-6-6.5h3.5z" fill="#111"/></svg>
<div class="a" style="left:555px;top:252px;width:972px;height:2px;background:#6f6f6f;"></div>
<div class="a" style="left:555px;top:252px;width:2px;height:580px;background:#6f6f6f;"></div>
<div class="a" style="left:1526px;top:252px;width:1px;height:580px;background:#f8f8f8;"></div>
<div class="a" style="left:1505px;top:254px;width:21px;height:577px;background:#f0f0f0;"></div>
<div class="a" style="left:1506px;top:276px;width:19px;height:430px;background:#cdcdcd;"></div>
<svg class="i" style="left:1510px;top:262px;" width="10" height="6" viewBox="0 0 10 6"><path d="M1 5.5l4-4 4 4" fill="none" stroke="#606060" stroke-width="1.8"/></svg>
<svg class="i" style="left:1510px;top:817px;" width="10" height="6" viewBox="0 0 10 6"><path d="M1 0.5l4 4 4-4" fill="none" stroke="#606060" stroke-width="1.8"/></svg>
<div class="a" style="left:554px;top:831px;width:974px;height:31px;background:#f0f0f0;border-top:1px solid #fafafa"></div>
<div class="a" style="left:1252px;top:834px;width:1px;height:28px;background:#dedede;"></div>
<div class="a" style="left:1419px;top:834px;width:1px;height:28px;background:#dedede;"></div>
<div class="a" style="left:557px;top:254px;width:948px;height:577px;overflow:hidden"><div class="a" style="left:-557px;top:-254px;width:1920px;height:1080px"><svg class="i" style="left:566px;top:263.5px;" width="9" height="6" viewBox="0 0 9 6"><path d="M1 1l3.5 3.5L8 1" fill="none" stroke="#555" stroke-width="1.3"/></svg>
<svg class="i" style="left:585px;top:256.5px;" width="18" height="20" viewBox="0 0 18 20"><path d="M0 8h17v11h-17z" fill="#d6d6d6"/><path d="M0 18h17v1.5h-17z" fill="#a0a0a0"/><path d="M3 12h2v3h-2zM12 12h2v3h-2z" fill="#2a2a2a"/><path d="M8 0h7v9h-7z" fill="#3b3b3b"/><path d="M10.5 2h2v2h-2z" fill="#7bc47b"/><path d="M7 8h9v1h-9z" fill="#bbb"/></svg>
<div class="t" style="left:610.0px;top:259.00px;font-size:15.50px;color:#000;transform:scaleX(0.8325);transform-origin:0 0;">DESKTOP-8LTN8LU</div>
<svg class="i" style="left:592px;top:284.5px;" width="6" height="9" viewBox="0 0 6 9"><path d="M1 1l3.5 3.5L1 8" fill="none" stroke="#8a8a8a" stroke-width="1.2"/></svg>
<svg class="i" style="left:609px;top:278.5px;" width="20" height="20" viewBox="0 0 20 20"><path d="M4 4c0-3 10-3 10 0v13c0 3-10 3-10 0z" fill="#3cb34a"/><ellipse cx="9" cy="4" rx="5" ry="2" fill="#d9f0dc"/><path d="M0 10h4M0 13h4" stroke="#c9a227" stroke-width="1.6"/><path d="M3 8h5l4 3.5-4 3.5h-5z" fill="#333"/><path d="M12 11.5c6 0 7-4 4-7" fill="none" stroke="#333" stroke-width="1.2"/><path d="M1 1l3 3" stroke="#333"/></svg>
<div class="t" style="left:634.0px;top:281.00px;font-size:15.50px;color:#000;transform:scaleX(0.9240);transform-origin:0 0;">Akkus</div>
<svg class="i" style="left:590px;top:308.5px;" width="9" height="6" viewBox="0 0 9 6"><path d="M1 1l3.5 3.5L8 1" fill="none" stroke="#555" stroke-width="1.3"/></svg>
<svg class="i" style="left:609px;top:301.5px;" width="20" height="20" viewBox="0 0 20 20"><path d="M3 0h10v5h-10z" fill="#e4e4e4" stroke="#777" stroke-width="0.8"/><path d="M1 5h14v11h-14z" fill="#6a6a6a"/><path d="M3 8h10M3 11h10" stroke="#999"/><path d="M3 16h3v2h-3zM10 16h3v2h-3z" fill="#555"/><path d="M6 16h4v4h-4z" fill="#555"/></svg>
<div class="t" style="left:634.0px;top:304.00px;font-size:15.50px;color:#000;transform:scaleX(0.8792);transform-origin:0 0;">Anschlüsse (COM &amp; LPT)</div>
<svg class="i" style="left:634px;top:323.5px;" width="20" height="20" viewBox="0 0 20 20"><path d="M3 0h10v5h-10z" fill="#e4e4e4" stroke="#777" stroke-width="0.8"/><path d="M1 5h14v11h-14z" fill="#6a6a6a"/><path d="M3 8h10M3 11h10" stroke="#999"/><path d="M3 16h3v2h-3zM10 16h3v2h-3z" fill="#555"/><path d="M6 16h4v4h-4z" fill="#555"/></svg>
<div class="t" style="left:658.0px;top:326.00px;font-size:15.50px;color:#000;transform:scaleX(0.9249);transform-origin:0 0;">Intel(R) Active Management Technology - SOL (COM3)</div>
<svg class="i" style="left:634px;top:346.5px;" width="20" height="20" viewBox="0 0 20 20"><path d="M3 0h10v5h-10z" fill="#e4e4e4" stroke="#777" stroke-width="0.8"/><path d="M1 5h14v11h-14z" fill="#6a6a6a"/><path d="M3 8h10M3 11h10" stroke="#999"/><path d="M3 16h3v2h-3zM10 16h3v2h-3z" fill="#555"/><path d="M6 16h4v4h-4z" fill="#555"/></svg>
<div class="t" style="left:658.0px;top:349.00px;font-size:15.50px;color:#000;transform:scaleX(0.8449);transform-origin:0 0;">USB-SERIAL CH340 (COM5)</div>
<svg class="i" style="left:592px;top:374.5px;" width="6" height="9" viewBox="0 0 6 9"><path d="M1 1l3.5 3.5L1 8" fill="none" stroke="#8a8a8a" stroke-width="1.2"/></svg>
<svg class="i" style="left:609px;top:368.5px;" width="20" height="20" viewBox="0 0 20 20"><defs><linearGradient id="spk" x1="0" y1="0" x2="1" y2="0"><stop offset="0" stop-color="#9a9a9a"/><stop offset="0.6" stop-color="#e2e2e2"/><stop offset="1" stop-color="#b5b5b5"/></linearGradient></defs><path d="M3 6h4l7-6v20l-7-6h-4z" fill="url(#spk)"/><path d="M3 6h4v8h-4z" fill="#7d7d7d"/><path d="M13 0.5v19" stroke="#6a6a6a" stroke-width="1.5"/></svg>
<div class="t" style="left:634.0px;top:371.00px;font-size:15.50px;color:#000;transform:scaleX(0.9471);transform-origin:0 0;">Audio, Video und Gamecontroller</div>
<svg class="i" style="left:592px;top:397.5px;" width="6" height="9" viewBox="0 0 6 9"><path d="M1 1l3.5 3.5L1 8" fill="none" stroke="#8a8a8a" stroke-width="1.2"/></svg>
<svg class="i" style="left:609px;top:391.5px;" width="20" height="20" viewBox="0 0 20 20"><defs><linearGradient id="spk" x1="0" y1="0" x2="1" y2="0"><stop offset="0" stop-color="#9a9a9a"/><stop offset="0.6" stop-color="#e2e2e2"/><stop offset="1" stop-color="#b5b5b5"/></linearGradient></defs><path d="M3 6h4l7-6v20l-7-6h-4z" fill="url(#spk)"/><path d="M3 6h4v8h-4z" fill="#7d7d7d"/><path d="M13 0.5v19" stroke="#6a6a6a" stroke-width="1.5"/></svg>
<div class="t" style="left:634.0px;top:394.00px;font-size:15.50px;color:#000;transform:scaleX(0.9661);transform-origin:0 0;">Audioeingänge und -ausgänge</div>
<svg class="i" style="left:592px;top:419.5px;" width="6" height="9" viewBox="0 0 6 9"><path d="M1 1l3.5 3.5L1 8" fill="none" stroke="#8a8a8a" stroke-width="1.2"/></svg>
<svg class="i" style="left:609px;top:413.5px;" width="20" height="20" viewBox="0 0 20 20"><path d="M6 0h6v5h-6z" fill="#fff" stroke="#555"/><path d="M4 5h10v10h-10z" fill="#444"/><path d="M7 15h4v5h-4z" fill="#222"/></svg>
<div class="t" style="left:634.0px;top:416.00px;font-size:15.50px;color:#000;transform:scaleX(0.8993);transform-origin:0 0;">AVM USB-Fernanschluss</div>
<svg class="i" style="left:592px;top:442.5px;" width="6" height="9" viewBox="0 0 6 9"><path d="M1 1l3.5 3.5L1 8" fill="none" stroke="#8a8a8a" stroke-width="1.2"/></svg>
<svg class="i" style="left:609px;top:436.5px;" width="20" height="20" viewBox="0 0 20 20"><path d="M0.5 0.5h17v19h-17z" fill="#e9efea" stroke="#9aa89d"/><ellipse cx="9" cy="10" rx="5" ry="7" fill="none" stroke="#666" stroke-width="1"/><ellipse cx="9" cy="10" rx="3" ry="5" fill="none" stroke="#777" stroke-width="1"/><path d="M9 6v8" stroke="#777"/></svg>
<div class="t" style="left:634.0px;top:439.00px;font-size:15.50px;color:#000;transform:scaleX(0.9201);transform-origin:0 0;">Biometrische Geräte</div>
<svg class="i" style="left:592px;top:464.5px;" width="6" height="9" viewBox="0 0 6 9"><path d="M1 1l3.5 3.5L1 8" fill="none" stroke="#8a8a8a" stroke-width="1.2"/></svg>
<svg class="i" style="left:609px;top:458.5px;" width="20" height="20" viewBox="0 0 20 20"><ellipse cx="9" cy="10" rx="8" ry="10" fill="#1e7de0"/><path d="M5.5 6.5l7 7-3.5 3v-14l3.5 3-7 7" fill="none" stroke="#fff" stroke-width="1.4"/></svg>
<div class="t" style="left:634.0px;top:461.00px;font-size:15.50px;color:#000;transform:scaleX(0.9771);transform-origin:0 0;">Bluetooth</div>
<svg class="i" style="left:592px;top:487.5px;" width="6" height="9" viewBox="0 0 6 9"><path d="M1 1l3.5 3.5L1 8" fill="none" stroke="#8a8a8a" stroke-width="1.2"/></svg>
<svg class="i" style="left:609px;top:481.5px;" width="20" height="20" viewBox="0 0 20 20"><path d="M0 1h20v14h-20z" fill="#2f97de"/><path d="M1 2h18v12h-18z" fill="#64c0f4"/><path d="M7 15h6v2h-6z" fill="#9aa"/><path d="M0 18h20v2h-20z" fill="#c9d0d4"/></svg>
<div class="t" style="left:634.0px;top:484.00px;font-size:15.50px;color:#000;transform:scaleX(0.9551);transform-origin:0 0;">Computer</div>
<svg class="i" style="left:592px;top:509.5px;" width="6" height="9" viewBox="0 0 6 9"><path d="M1 1l3.5 3.5L1 8" fill="none" stroke="#8a8a8a" stroke-width="1.2"/></svg>
<svg class="i" style="left:609px;top:503.5px;" width="20" height="20" viewBox="0 0 20 20"><path d="M4 0h12v6h-12z" fill="#fff" stroke="#777"/><path d="M7 1h6v3h-6z" fill="#4cb3e6"/><path d="M0 5h20v10h-20z" fill="#707070"/><path d="M1 6h18v4h-18z" fill="#a6a6a6"/><path d="M4 12h12v8h-12z" fill="#f3f3f3" stroke="#888"/></svg>
<div class="t" style="left:634.0px;top:506.00px;font-size:15.50px;color:#000;transform:scaleX(0.9259);transform-origin:0 0;">Druckwarteschlangen</div>
<svg class="i" style="left:592px;top:532.5px;" width="6" height="9" viewBox="0 0 6 9"><path d="M1 1l3.5 3.5L1 8" fill="none" stroke="#8a8a8a" stroke-width="1.2"/></svg>
<svg class="i" style="left:609px;top:526.5px;" width="20" height="20" viewBox="0 0 20 20"><path d="M3 0h12v20h-12z" fill="#2a2a2a"/><path d="M5 2h8v16h-8z" fill="#4a4a4a"/><path d="M0 3h3M0 6h3M0 9h3M0 12h3M0 15h3M15 3h3M15 6h3M15 9h3M15 12h3M15 15h3" stroke="#555"/><path d="M7 0h4v3h-4z" fill="#fff"/></svg>
<div class="t" style="left:634.0px;top:529.00px;font-size:15.50px;color:#000;transform:scaleX(0.9135);transform-origin:0 0;">Firmware</div>
<svg class="i" style="left:592px;top:554.5px;" width="6" height="9" viewBox="0 0 6 9"><path d="M1 1l3.5 3.5L1 8" fill="none" stroke="#8a8a8a" stroke-width="1.2"/></svg>
<svg class="i" style="left:609px;top:548.5px;" width="20" height="20" viewBox="0 0 20 20"><path d="M0 0h20v14h-20z" fill="#2f97de"/><path d="M1 1h18v12h-18z" fill="#64c0f4"/><path d="M7 8h12v8h-12z" fill="#2f8a3a"/><path d="M8 9h10v5h-10z" fill="#4caf50"/><path d="M8 16h8v3h-8z" fill="#e2b33c"/></svg>
<div class="t" style="left:634.0px;top:551.00px;font-size:15.50px;color:#000;transform:scaleX(0.9358);transform-origin:0 0;">Grafikkarten</div>
<svg class="i" style="left:592px;top:577.5px;" width="6" height="9" viewBox="0 0 6 9"><path d="M1 1l3.5 3.5L1 8" fill="none" stroke="#8a8a8a" stroke-width="1.2"/></svg>
<svg class="i" style="left:609px;top:571.5px;" width="20" height="20" viewBox="0 0 20 20"><path d="M1 0h18v8h-18z" fill="#d0d6dc" stroke="#8a9199"/><path d="M3 2h2v2h-2zM7 2h2v2h-2zM11 2h2v2h-2zM15 2h2v2h-2z" fill="#7d8790"/><path d="M0 9h20v8c0 3-4 3-5 0h-10c-1 3-5 3-5 0z" fill="#5d6670"/><path d="M7 10h6v4h-6z" fill="#3f6fb6"/></svg>
<div class="t" style="left:634.0px;top:574.00px;font-size:15.50px;color:#000;transform:scaleX(0.9194);transform-origin:0 0;">Human Interface Devices</div>
<svg class="i" style="left:592px;top:599.5px;" width="6" height="9" viewBox="0 0 6 9"><path d="M1 1l3.5 3.5L1 8" fill="none" stroke="#8a8a8a" stroke-width="1.2"/></svg>
<svg class="i" style="left:609px;top:593.5px;" width="20" height="20" viewBox="0 0 20 20"><circle cx="9" cy="8" r="8" fill="#8e8e8e"/><circle cx="9" cy="8" r="6" fill="#d3d3d3"/><circle cx="9" cy="8" r="3.5" fill="#3a3a3a"/><circle cx="9" cy="8" r="1.5" fill="#7aa6d6"/><path d="M8 16h2v2h-2z" fill="#555"/><path d="M4 18h10v2h-10z" fill="#444"/></svg>
<div class="t" style="left:634.0px;top:596.00px;font-size:15.50px;color:#000;transform:scaleX(0.8867);transform-origin:0 0;">Kameras</div>
<svg class="i" style="left:592px;top:622.5px;" width="6" height="9" viewBox="0 0 6 9"><path d="M1 1l3.5 3.5L1 8" fill="none" stroke="#8a8a8a" stroke-width="1.2"/></svg>
<svg class="i" style="left:609px;top:616.5px;" width="20" height="20" viewBox="0 0 20 20"><path d="M1 9h18v4h-18z" fill="#cfcfcf"/><path d="M0 13h20v5h-20z" fill="#3a3a3a"/><path d="M15 15h2v1.5h-2z" fill="#46c246"/></svg>
<div class="t" style="left:634.0px;top:619.00px;font-size:15.50px;color:#000;transform:scaleX(0.9089);transform-origin:0 0;">Laufwerke</div>
<svg class="i" style="left:592px;top:644.5px;" width="6" height="9" viewBox="0 0 6 9"><path d="M1 1l3.5 3.5L1 8" fill="none" stroke="#8a8a8a" stroke-width="1.2"/></svg>
<svg class="i" style="left:609px;top:638.5px;" width="20" height="20" viewBox="0 0 20 20"><path d="M9 0c6 0 8 4 8 10s-2 10-8 10-8-4-8-10 2-10 8-10z" fill="#3c4550"/><path d="M9 1.5c4.5 0 6.5 3 6.5 8.5s-2 8.5-6.5 8.5-6.5-3-6.5-8.5 2-8.5 6.5-8.5z" fill="#aab8c6"/><path d="M9 2v7" stroke="#3c4550" stroke-width="1.2"/></svg>
<div class="t" style="left:634.0px;top:641.00px;font-size:15.50px;color:#000;transform:scaleX(0.9432);transform-origin:0 0;">Mäuse und andere Zeigegeräte</div>
<svg class="i" style="left:592px;top:667.5px;" width="6" height="9" viewBox="0 0 6 9"><path d="M1 1l3.5 3.5L1 8" fill="none" stroke="#8a8a8a" stroke-width="1.2"/></svg>
<svg class="i" style="left:609px;top:661.5px;" width="20" height="20" viewBox="0 0 20 20"><path d="M0 1h20v14h-20z" fill="#2f97de"/><path d="M1 2h18v12h-18z" fill="#64c0f4"/><path d="M8 15h4v2h-4z" fill="#9aa"/><path d="M5 17h10v1h-10z" fill="#aab"/></svg>
<div class="t" style="left:634.0px;top:664.00px;font-size:15.50px;color:#000;transform:scaleX(1.0115);transform-origin:0 0;">Monitore</div>
<svg class="i" style="left:592px;top:689.5px;" width="6" height="9" viewBox="0 0 6 9"><path d="M1 1l3.5 3.5L1 8" fill="none" stroke="#8a8a8a" stroke-width="1.2"/></svg>
<svg class="i" style="left:609px;top:683.5px;" width="20" height="20" viewBox="0 0 20 20"><path d="M5 0h15v10h-15z" fill="#2f97de"/><path d="M6 1h13v8h-13z" fill="#64c0f4"/><path d="M0 5h15v10h-15z" fill="#2f97de"/><path d="M1 6h13v8h-13z" fill="#7fd0f8"/><path d="M2 16h16v3h-16z" fill="#c8d0d4"/><path d="M6 15h6v3h-6z" fill="#3cb34a"/></svg>
<div class="t" style="left:634.0px;top:686.00px;font-size:15.50px;color:#000;transform:scaleX(0.9388);transform-origin:0 0;">Netzwerkadapter</div>
<svg class="i" style="left:592px;top:712.5px;" width="6" height="9" viewBox="0 0 6 9"><path d="M1 1l3.5 3.5L1 8" fill="none" stroke="#8a8a8a" stroke-width="1.2"/></svg>
<svg class="i" style="left:609px;top:706.5px;" width="20" height="20" viewBox="0 0 20 20"><path d="M0 0h18v19h-18z" fill="#2e6b3a"/><path d="M1 1h16v17h-16z" fill="#3b8a4a"/><path d="M4 4h10v11h-10z" fill="#dedede" stroke="#9a9a9a"/></svg>
<div class="t" style="left:634.0px;top:709.00px;font-size:15.50px;color:#000;transform:scaleX(0.8849);transform-origin:0 0;">Prozessoren</div>
<svg class="i" style="left:592px;top:734.5px;" width="6" height="9" viewBox="0 0 6 9"><path d="M1 1l3.5 3.5L1 8" fill="none" stroke="#8a8a8a" stroke-width="1.2"/></svg>
<svg class="i" style="left:609px;top:728.5px;" width="20" height="20" viewBox="0 0 20 20"><path d="M0 2h20v15h-20z" fill="#4a4a4a"/><path d="M1.5 3.5h17v12h-17z" fill="#dbe9b8"/><path d="M10 3.5v12M1.5 10h17" stroke="#c9a84a" stroke-width="1.3"/><circle cx="6" cy="7" r="1.8" fill="#e04a3a"/></svg>
<div class="t" style="left:634.0px;top:731.00px;font-size:15.50px;color:#000;transform:scaleX(0.8892);transform-origin:0 0;">Sensoren</div>
<svg class="i" style="left:592px;top:757.5px;" width="6" height="9" viewBox="0 0 6 9"><path d="M1 1l3.5 3.5L1 8" fill="none" stroke="#8a8a8a" stroke-width="1.2"/></svg>
<svg class="i" style="left:609px;top:751.5px;" width="20" height="20" viewBox="0 0 20 20"><path d="M2 0h8v18h-8z" fill="#2f2f2f"/><path d="M1 17h11v3h-11z" fill="#222"/><path d="M4 3h3v3h-3z" fill="#52d152"/><circle cx="15" cy="8" r="3.5" fill="#e8b43a"/><path d="M14 11h2.5v7h-2.5z" fill="#e8b43a"/></svg>
<div class="t" style="left:634.0px;top:754.00px;font-size:15.50px;color:#000;transform:scaleX(0.9202);transform-origin:0 0;">Sicherheitsgeräte</div>
<svg class="i" style="left:592px;top:779.5px;" width="6" height="9" viewBox="0 0 6 9"><path d="M1 1l3.5 3.5L1 8" fill="none" stroke="#8a8a8a" stroke-width="1.2"/></svg>
<svg class="i" style="left:609px;top:773.5px;" width="20" height="20" viewBox="0 0 20 20"><path d="M4 0h9v18h-9z" fill="#2f2f2f"/><path d="M2 17h13v3h-13z" fill="#222"/><path d="M6 3h3v3h-3z" fill="#52d152"/></svg>
<div class="t" style="left:634.0px;top:776.00px;font-size:15.50px;color:#000;transform:scaleX(0.9228);transform-origin:0 0;">Softwaregeräte</div>
<svg class="i" style="left:592px;top:802.5px;" width="6" height="9" viewBox="0 0 6 9"><path d="M1 1l3.5 3.5L1 8" fill="none" stroke="#8a8a8a" stroke-width="1.2"/></svg>
<svg class="i" style="left:609px;top:796.5px;" width="20" height="20" viewBox="0 0 20 20"><path d="M2 2h9v16h-9z" fill="#2f2f2f"/><path d="M1 17h11v3h-11z" fill="#222"/><path d="M4 5h3v3h-3z" fill="#52d152"/><path d="M11 3h6v6h-6z" fill="#3a8ad8"/><path d="M14 0v4M12 1h4" stroke="#3a8ad8" stroke-width="1.6"/></svg>
<div class="t" style="left:634.0px;top:799.00px;font-size:15.50px;color:#000;transform:scaleX(0.9542);transform-origin:0 0;">Softwarekomponenten</div>
<svg class="i" style="left:592px;top:824.5px;" width="6" height="9" viewBox="0 0 6 9"><path d="M1 1l3.5 3.5L1 8" fill="none" stroke="#8a8a8a" stroke-width="1.2"/></svg>
<svg class="i" style="left:609px;top:818.5px;" width="20" height="20" viewBox="0 0 20 20"><path d="M8 1 L1 7 L8 13" fill="none" stroke="#3a3a3a" stroke-width="2.5"/><path d="M6 6h8v3h-8z" fill="#555"/><path d="M9 9h10v6h-10z" fill="#4a9a5a"/></svg>
<div class="t" style="left:634.0px;top:821.00px;font-size:15.50px;color:#000;transform:scaleX(0.9365);transform-origin:0 0;">Speichercontroller</div></div></div>
<svg class="i" style="left:620px;top:362px;" width="242" height="14" viewBox="0 0 242 14"><path d="M4 11.5 C 20 10, 40 8.5, 70 8 S 100 9.5, 125 9 S 160 7, 172 6.5 S 215 7.5, 237.5 9" fill="none" stroke="#d9141f" stroke-width="2.8" stroke-linecap="round"/></svg>
<div class="a" style="left:20px;top:308px;width:380px;height:764px;background:#2b2b2b;border:1px solid #a8a8a8;box-shadow:2px 2px 4px rgba(0,0,0,0.45);z-index:50"></div>
<div class="t" style="left:63.0px;top:332.00px;font-size:15.50px;color:#ffffff;transform:scaleX(0.9315);transform-origin:0 0;z-index:51">Apps und Features</div>
<div class="t" style="left:63.0px;top:372.00px;font-size:15.50px;color:#ffffff;transform:scaleX(0.9949);transform-origin:0 0;z-index:51">Mobilitätscenter</div>
<div class="t" style="left:63.0px;top:412.00px;font-size:15.50px;color:#ffffff;transform:scaleX(0.9743);transform-origin:0 0;z-index:51">Energieoptionen</div>
<div class="t" style="left:63.0px;top:452.00px;font-size:15.50px;color:#ffffff;transform:scaleX(0.9429);transform-origin:0 0;z-index:51">Ereignisanzeige</div>
<div class="t" style="left:63.0px;top:492.00px;font-size:15.50px;color:#ffffff;transform:scaleX(0.9095);transform-origin:0 0;z-index:51">System</div>
<div class="t" style="left:63.0px;top:532.00px;font-size:15.50px;color:#ffffff;transform:scaleX(0.9584);transform-origin:0 0;z-index:51">Geräte-Manager</div>
<div class="t" style="left:63.0px;top:572.00px;font-size:15.50px;color:#ffffff;transform:scaleX(0.9651);transform-origin:0 0;z-index:51">Netzwerkverbindungen</div>
<div class="t" style="left:63.0px;top:612.00px;font-size:15.50px;color:#ffffff;transform:scaleX(0.9757);transform-origin:0 0;z-index:51">Datenträgerverwaltung</div>
<div class="t" style="left:63.0px;top:652.00px;font-size:15.50px;color:#ffffff;transform:scaleX(0.9719);transform-origin:0 0;z-index:51">Computerverwaltung</div>
<div class="t" style="left:63.0px;top:692.00px;font-size:15.50px;color:#ffffff;transform:scaleX(0.9410);transform-origin:0 0;z-index:51">Windows PowerShell</div>
<div class="t" style="left:63.0px;top:732.00px;font-size:15.50px;color:#ffffff;transform:scaleX(0.9621);transform-origin:0 0;z-index:51">Windows PowerShell (Administrator)</div>
<div class="a" style="left:33px;top:764px;width:354px;height:1px;background:#8a8a8a;z-index:51"></div>
<div class="t" style="left:63.0px;top:783.00px;font-size:15.50px;color:#ffffff;transform:scaleX(0.9368);transform-origin:0 0;z-index:51">Task-Manager</div>
<div class="t" style="left:63.0px;top:823.00px;font-size:15.50px;color:#ffffff;transform:scaleX(0.9455);transform-origin:0 0;z-index:51">Einstellungen</div>
<div class="t" style="left:63.0px;top:863.00px;font-size:15.50px;color:#ffffff;transform:scaleX(0.9529);transform-origin:0 0;z-index:51">Explorer</div>
<div class="t" style="left:63.0px;top:903.00px;font-size:15.50px;color:#ffffff;transform:scaleX(0.8940);transform-origin:0 0;z-index:51">Suchen</div>
<div class="t" style="left:63.0px;top:943.00px;font-size:15.50px;color:#ffffff;transform:scaleX(0.9340);transform-origin:0 0;z-index:51">Ausführen</div>
<div class="a" style="left:33px;top:975px;width:354px;height:1px;background:#8a8a8a;z-index:51"></div>
<div class="t" style="left:63.0px;top:994.00px;font-size:15.50px;color:#ffffff;transform:scaleX(0.9718);transform-origin:0 0;z-index:51">Herunterfahren oder abmelden</div>
<svg class="i" style="left:376px;top:993px;z-index:51" width="11" height="16" viewBox="0 0 11 16"><path d="M1 0.5l9 7.5-9 7.5" fill="none" stroke="#e8e8e8" stroke-width="1.3"/></svg>
<div class="t" style="left:63.0px;top:1034.00px;font-size:15.50px;color:#ffffff;transform:scaleX(0.9673);transform-origin:0 0;z-index:51">Desktop</div>
<div class="a" style="left:0px;top:1017px;width:44px;height:25px;background:#fff;border:1px solid #9a9a9a;z-index:60"></div>
<div class="t" style="left:6.0px;top:1023.00px;font-size:14.68px;color:#555;z-index:61">Start</div>
<div class="a" style="left:0px;top:1042px;width:1920px;height:38px;background:linear-gradient(90deg,#26252b 0%,#29262d 48%,#222429 70%,#212427 73%,#2b323a 82%,#2e3a44 100%);z-index:10"></div>
<div class="a" style="left:0px;top:1042px;width:45px;height:38px;background:#42454c;z-index:10"></div>
<svg class="i" style="left:12px;top:1052px;z-index:11" width="20" height="19" viewBox="0 0 20 19"><path d="M0 1.5l8-1v8h-8zM0 9.5h8v8l-8-1z" fill="#3b9de8"/></svg>
<div class="a" style="left:45px;top:1072px;width:325px;height:8px;background:#fff;z-index:11"></div>
<div class="a" style="left:300px;top:1072px;width:60px;height:6px;background:#222;border-radius:0 0 12px 12px;z-index:11"></div>
<div class="a" style="left:377px;top:1077px;width:50px;height:3px;background:#76b9ed;z-index:11"></div>
<div class="t" style="left:402.0px;top:1054.00px;font-size:15.00px;color:#fff;z-index:11">P</div>
<div class="t" style="left:412.5px;top:1058.00px;font-size:11.50px;color:#fff;z-index:11">…</div>
<div class="a" style="left:437px;top:1077px;width:50px;height:3px;background:#76b9ed;z-index:11"></div>
<svg class="i" style="left:438px;top:1051px;z-index:11" width="20" height="20" viewBox="0 0 20 20"><circle cx="10" cy="10" r="9.5" fill="#db4437"/><path d="M10 10 L1.8 14.8 A9.5 9.5 0 0 0 14.7 18.3Z" fill="#0f9d58"/><path d="M10 10 L19.5 10 A9.5 9.5 0 0 1 14.7 18.3Z" fill="#f4b400"/><path d="M10 10L19.5 10A9.5 9.5 0 0 0 17 3.6Z" fill="#f4b400"/><circle cx="10" cy="10" r="4.3" fill="#fff"/><circle cx="10" cy="10" r="3.4" fill="#4285f4"/><circle cx="15" cy="15" r="4.2" fill="#c9381f"/><text x="15" y="17.5" font-size="6" text-anchor="middle" fill="#fff" font-family="Liberation Sans">L</text></svg>
<div class="t" style="left:462.0px;top:1054.00px;font-size:15.00px;color:#fff;z-index:11">A</div>
<div class="t" style="left:472.5px;top:1058.00px;font-size:11.50px;color:#fff;z-index:11">…</div>
<div class="a" style="left:496px;top:1077px;width:50px;height:3px;background:#76b9ed;z-index:11"></div>
<svg class="i" style="left:497px;top:1051px;z-index:11" width="20" height="20" viewBox="0 0 20 20"><circle cx="10" cy="10" r="9.5" fill="#db4437"/><path d="M10 10 L1.8 14.8 A9.5 9.5 0 0 0 14.7 18.3Z" fill="#0f9d58"/><path d="M10 10 L19.5 10 A9.5 9.5 0 0 1 14.7 18.3Z" fill="#f4b400"/><path d="M10 10L19.5 10A9.5 9.5 0 0 0 17 3.6Z" fill="#f4b400"/><circle cx="10" cy="10" r="4.3" fill="#fff"/><circle cx="10" cy="10" r="3.4" fill="#4285f4"/><circle cx="15" cy="15" r="4.2" fill="#c9381f"/><text x="15" y="17.5" font-size="6" text-anchor="middle" fill="#fff" font-family="Liberation Sans">L</text></svg>
<div class="t" style="left:521.0px;top:1054.00px;font-size:15.00px;color:#fff;z-index:11">E</div>
<div class="t" style="left:531.5px;top:1058.00px;font-size:11.50px;color:#fff;z-index:11">…</div>
<div class="a" style="left:556px;top:1077px;width:50px;height:3px;background:#76b9ed;z-index:11"></div>
<svg class="i" style="left:557px;top:1051px;z-index:11" width="20" height="20" viewBox="0 0 20 20"><circle cx="10" cy="10" r="9.5" fill="#db4437"/><path d="M10 10 L1.8 14.8 A9.5 9.5 0 0 0 14.7 18.3Z" fill="#0f9d58"/><path d="M10 10 L19.5 10 A9.5 9.5 0 0 1 14.7 18.3Z" fill="#f4b400"/><path d="M10 10L19.5 10A9.5 9.5 0 0 0 17 3.6Z" fill="#f4b400"/><circle cx="10" cy="10" r="4.3" fill="#fff"/><circle cx="10" cy="10" r="3.4" fill="#4285f4"/><circle cx="15" cy="15" r="4.2" fill="#c9381f"/><text x="15" y="17.5" font-size="6" text-anchor="middle" fill="#fff" font-family="Liberation Sans">L</text></svg>
<div class="t" style="left:581.0px;top:1054.00px;font-size:15.00px;color:#fff;z-index:11">Ti</div>
<div class="t" style="left:593.4px;top:1058.00px;font-size:11.50px;color:#fff;z-index:11">…</div>
<div class="a" style="left:615px;top:1077px;width:50px;height:3px;background:#76b9ed;z-index:11"></div>
<svg class="i" style="left:616px;top:1051px;z-index:11" width="20" height="20" viewBox="0 0 20 20"><circle cx="10" cy="10" r="9.5" fill="#db4437"/><path d="M10 10 L1.8 14.8 A9.5 9.5 0 0 0 14.7 18.3Z" fill="#0f9d58"/><path d="M10 10 L19.5 10 A9.5 9.5 0 0 1 14.7 18.3Z" fill="#f4b400"/><path d="M10 10L19.5 10A9.5 9.5 0 0 0 17 3.6Z" fill="#f4b400"/><circle cx="10" cy="10" r="4.3" fill="#fff"/><circle cx="10" cy="10" r="3.4" fill="#4285f4"/><circle cx="15" cy="15" r="4.2" fill="#c9381f"/><text x="15" y="17.5" font-size="6" text-anchor="middle" fill="#fff" font-family="Liberation Sans">L</text></svg>
<div class="t" style="left:640.0px;top:1054.00px;font-size:15.00px;color:#fff;z-index:11">(1</div>
<div class="t" style="left:653.8px;top:1058.00px;font-size:11.50px;color:#fff;z-index:11">…</div>
<div class="a" style="left:676px;top:1077px;width:50px;height:3px;background:#76b9ed;z-index:11"></div>
<svg class="i" style="left:676px;top:1051px;z-index:11" width="20" height="20" viewBox="0 0 20 20"><g transform="translate(4,1.5)"><path d="M0.3 0.3h11v8.7h1v6.5h-8.5v1.5l-3.5-1.3z" fill="#f3cf67"/><path d="M0.3 0.3l3.9 1.3v15.4l-3.9-1.3z" fill="#fde6a0"/></g></svg>
<div class="t" style="left:700.0px;top:1054.00px;font-size:15.00px;color:#fff;z-index:11">Niu</div>
<div class="a" style="left:736px;top:1077px;width:50px;height:3px;background:#76b9ed;z-index:11"></div>
<svg class="i" style="left:737px;top:1051px;z-index:11" width="20" height="20" viewBox="0 0 20 20"><g transform="translate(4,1.5)"><path d="M0.3 0.3h11v8.7h1v6.5h-8.5v1.5l-3.5-1.3z" fill="#f3cf67"/><path d="M0.3 0.3l3.9 1.3v15.4l-3.9-1.3z" fill="#fde6a0"/></g></svg>
<div class="t" style="left:761.0px;top:1054.00px;font-size:15.00px;color:#fff;z-index:11">T</div>
<div class="t" style="left:770.7px;top:1058.00px;font-size:11.50px;color:#fff;z-index:11">…</div>
<div class="a" style="left:795px;top:1077px;width:50px;height:3px;background:#76b9ed;z-index:11"></div>
<svg class="i" style="left:796px;top:1051px;z-index:11" width="20" height="20" viewBox="0 0 20 20"><g transform="translate(4,1.5)"><path d="M0.3 0.3h11v8.7h1v6.5h-8.5v1.5l-3.5-1.3z" fill="#f3cf67"/><path d="M0.3 0.3l3.9 1.3v15.4l-3.9-1.3z" fill="#fde6a0"/></g></svg>
<div class="t" style="left:820.0px;top:1054.00px;font-size:15.00px;color:#fff;z-index:11">b</div>
<div class="t" style="left:828.8px;top:1058.00px;font-size:11.50px;color:#fff;z-index:11">…</div>
<div class="a" style="left:855px;top:1077px;width:50px;height:3px;background:#76b9ed;z-index:11"></div>
<svg class="i" style="left:856px;top:1051px;z-index:11" width="20" height="20" viewBox="0 0 20 20"><g transform="translate(4,1.5)"><path d="M0.3 0.3h11v8.7h1v6.5h-8.5v1.5l-3.5-1.3z" fill="#f3cf67"/><path d="M0.3 0.3l3.9 1.3v15.4l-3.9-1.3z" fill="#fde6a0"/></g></svg>
<div class="t" style="left:880.0px;top:1054.00px;font-size:15.00px;color:#fff;z-index:11">A</div>
<div class="t" style="left:890.5px;top:1058.00px;font-size:11.50px;color:#fff;z-index:11">…</div>
<div class="a" style="left:914px;top:1077px;width:50px;height:3px;background:#76b9ed;z-index:11"></div>
<svg class="i" style="left:915px;top:1051px;z-index:11" width="20" height="20" viewBox="0 0 20 20"><g transform="translate(4,1.5)"><path d="M0.3 0.3h11v8.7h1v6.5h-8.5v1.5l-3.5-1.3z" fill="#f3cf67"/><path d="M0.3 0.3l3.9 1.3v15.4l-3.9-1.3z" fill="#fde6a0"/></g></svg>
<div class="t" style="left:939.0px;top:1054.00px;font-size:15.00px;color:#fff;z-index:11">Niu</div>
<div class="a" style="left:974px;top:1077px;width:50px;height:3px;background:#76b9ed;z-index:11"></div>
<svg class="i" style="left:975px;top:1051px;z-index:11" width="20" height="20" viewBox="0 0 20 20"><g transform="translate(4,1.5)"><path d="M0.3 0.3h11v8.7h1v6.5h-8.5v1.5l-3.5-1.3z" fill="#f3cf67"/><path d="M0.3 0.3l3.9 1.3v15.4l-3.9-1.3z" fill="#fde6a0"/></g></svg>
<div class="t" style="left:999.0px;top:1054.00px;font-size:15.00px;color:#fff;z-index:11">N</div>
<div class="t" style="left:1010.3px;top:1058.00px;font-size:11.50px;color:#fff;z-index:11">…</div>
<div class="a" style="left:1034px;top:1077px;width:50px;height:3px;background:#76b9ed;z-index:11"></div>
<svg class="i" style="left:1035px;top:1051px;z-index:11" width="20" height="20" viewBox="0 0 20 20"><circle cx="9" cy="10" r="7" fill="#3a8a3a"/><path d="M4 7c3-3 8-2 9 2-2 3-6 2-9 4z" fill="#6fc24a"/><path d="M9 0 L17 19 M12 12 L4 19" stroke="#e0b020" stroke-width="2.5"/></svg>
<div class="t" style="left:1059.0px;top:1054.00px;font-size:15.00px;color:#fff;z-index:11">J</div>
<div class="t" style="left:1067.0px;top:1058.00px;font-size:11.50px;color:#fff;z-index:11">…</div>
<div class="a" style="left:1095px;top:1077px;width:50px;height:3px;background:#76b9ed;z-index:11"></div>
<svg class="i" style="left:1096px;top:1051px;z-index:11" width="20" height="20" viewBox="0 0 20 20"><path d="M2 0h16v20h-16z" fill="#6f7b88"/><path d="M4 2h12v4h-12z" fill="#7fd0f0"/><path d="M4 8h3v3h-3zM8.5 8h3v3h-3zM13 8h3v3h-3zM4 12.5h3v3h-3zM8.5 12.5h3v3h-3zM4 17h3v2h-3zM8.5 17h3v2h-3z" fill="#d8dde2"/><path d="M13 12.5h3v6.5h-3z" fill="#2a5aa8"/></svg>
<div class="t" style="left:1120.0px;top:1054.00px;font-size:15.00px;color:#fff;z-index:11">R</div>
<div class="t" style="left:1131.3px;top:1058.00px;font-size:11.50px;color:#fff;z-index:11">…</div>
<div class="a" style="left:1155px;top:1077px;width:50px;height:3px;background:#76b9ed;z-index:11"></div>
<svg class="i" style="left:1156px;top:1051px;z-index:11" width="20" height="20" viewBox="0 0 20 20"><path d="M3 0h10l5 5v15h-15z" fill="#fff"/><path d="M13 0v5h5" fill="#8fb8e8"/><path d="M5 8h10M5 11h10M5 14h10" stroke="#3a7ad0" stroke-width="1.5"/></svg>
<div class="t" style="left:1180.0px;top:1054.00px;font-size:15.00px;color:#fff;z-index:11">F</div>
<div class="t" style="left:1189.7px;top:1058.00px;font-size:11.50px;color:#fff;z-index:11">…</div>
<div class="a" style="left:1216px;top:1077px;width:50px;height:3px;background:#76b9ed;z-index:11"></div>
<svg class="i" style="left:1216px;top:1051px;z-index:11" width="20" height="20" viewBox="0 0 20 20"><path d="M10 3c6 0 10 4 9 8-1 3-4 2-5 4s-2 4-6 4c-5 0-8-3-8-7s4-9 10-9z" fill="#d8d2c4"/><circle cx="6" cy="9" r="1.8" fill="#e23"/><circle cx="10" cy="7" r="1.8" fill="#2a8ad8"/><circle cx="6" cy="14" r="1.8" fill="#3a3"/><path d="M12 15 L19 1" stroke="#e8a040" stroke-width="2.5"/></svg>
<div class="t" style="left:1240.0px;top:1054.00px;font-size:15.00px;color:#fff;z-index:11">St</div>
<div class="t" style="left:1254.7px;top:1058.00px;font-size:11.50px;color:#fff;z-index:11">…</div>
<div class="a" style="left:1275px;top:1077px;width:50px;height:3px;background:#76b9ed;z-index:11"></div>
<svg class="i" style="left:1276px;top:1051px;z-index:11" width="20" height="20" viewBox="0 0 20 20"><path d="M0 0h20v20h-20z" fill="#d8d8d8"/><path d="M3 5c4-4 6 2 9-2 3 2 6 5 3 8 3 3 1 7-3 6-3 2-6 4-8 0-3-2-4-6-1-8z" fill="#d01818"/></svg>
<div class="t" style="left:1300.0px;top:1054.00px;font-size:15.00px;color:#fff;z-index:11">1</div>
<div class="t" style="left:1308.8px;top:1058.00px;font-size:11.50px;color:#fff;z-index:11">…</div>
<div class="a" style="left:1335px;top:1077px;width:50px;height:3px;background:#76b9ed;z-index:11"></div>
<svg class="i" style="left:1336px;top:1051px;z-index:11" width="20" height="20" viewBox="0 0 20 20"><path d="M1 9h18v10h-18z" fill="#d4d4d4"/><path d="M4 12h2.5v3h-2.5zM13.5 12h2.5v3h-2.5z" fill="#333"/><path d="M6 0h8v10h-8z" fill="#3b3b3b"/><path d="M9 2h2v2h-2z" fill="#49b849"/></svg>
<div class="t" style="left:1360.0px;top:1054.00px;font-size:15.00px;color:#fff;z-index:11">G</div>
<div class="t" style="left:1372.2px;top:1058.00px;font-size:11.50px;color:#fff;z-index:11">…</div>
<div class="a" style="left:1914px;top:1042px;width:1px;height:38px;background:#8796a2;z-index:11"></div>
<svg class="i" style="left:1437px;top:1046px;z-index:11" width="32" height="30" viewBox="0 0 32 30"><path d="M14 1c-5 1-7 7-3 11 3 3 8 2 9-1-4 1-8-2-6-10z" fill="#f2b134"/><path d="M6 28c-5 0-6-8 0-9 1-5 8-6 11-2 4-2 9 1 8 5 5 0 6 6 1 6z" fill="#d7e6f7"/><path d="M6 28c-5 0-6-8 0-9 1-5 8-6 11-2 4-2 9 1 8 5 5 0 6 6 1 6z" fill="none" stroke="#a9c3e0"/></svg>
<div class="t" style="left:1478.0px;top:1052.00px;font-size:18.02px;color:#fff;transform:scaleX(0.8929);transform-origin:0 0;z-index:11">4°C</div>
<svg class="i" style="left:1535px;top:1057px;z-index:11" width="17" height="10" viewBox="0 0 17 10"><path d="M1 9l7.5-7.5L16 9" fill="none" stroke="#fff" stroke-width="1.5"/></svg>
<svg class="i" style="left:1575px;top:1052px;z-index:11" width="18" height="17" viewBox="0 0 18 17"><path d="M1 16A15 15 0 0 1 16 1M4 16A12 12 0 0 1 16 4M7 16A9 9 0 0 1 16 7M10 16A6 6 0 0 1 16 10" fill="none" stroke="#f4f4f4" stroke-width="1.3"/><circle cx="15" cy="15" r="1.9" fill="#fff"/></svg>
<div class="a" style="left:1612px;top:1051px;width:22px;height:21px;background:#10e010;z-index:11"></div>
<div class="t" style="left:1615.0px;top:1051.00px;font-size:12.59px;color:#111;font-weight:bold;z-index:11">42</div>
<div class="t" style="left:1613.0px;top:1061.00px;font-size:10.69px;color:#111;font-weight:bold;z-index:11">cpu</div>
<svg class="i" style="left:1652px;top:1054px;z-index:11" width="23" height="15" viewBox="0 0 23 15"><path d="M5.5 3.5h15v9h-15z" fill="#fff" stroke="#fff" stroke-width="1.3"/><path d="M7 5h12v6h-12z" fill="#f4f4f4"/><path d="M21 6h1.5v4h-1.5z" fill="#fff"/><path d="M1.5 0.5v2.5M3.5 0.5v2.5" stroke="#fff" stroke-width="0.9"/><path d="M0.8 3h3.5v2c0 1-0.7 1.5-1.7 1.5v6h2.5" fill="none" stroke="#fff" stroke-width="1.1"/></svg>
<svg class="i" style="left:1692px;top:1053px;z-index:11" width="22" height="14" viewBox="0 0 22 14"><path d="M4 13c-4 0-4-6 0-6.5 0.5-4.5 6-6.5 9.5-3 3-2 6.5 0 6.5 3.5 3 0.5 3 6 0 6z" fill="#cfcfcf"/><path d="M4 13c-3 0-3.5-3-1.5-4.5l8.5-1.5 9.5 3c1 2 0 3-1.5 3z" fill="#f2f2f2"/></svg>
<svg class="i" style="left:1733px;top:1051px;z-index:11" width="21" height="20" viewBox="0 0 21 20"><path d="M1 7h4l5-5v16l-5-5h-4z" fill="none" stroke="#fff" stroke-width="1.2"/><path d="M13 7.5a3.5 3.5 0 0 1 0 5M15.5 5a7 7 0 0 1 0 10" fill="none" stroke="#fff" stroke-width="1.2"/><path d="M18 2.5a10.5 10.5 0 0 1 0 15" fill="none" stroke="#8a8f95" stroke-width="1"/></svg>
<svg class="i" style="left:1772px;top:1050px;z-index:11" width="22" height="22" viewBox="0 0 22 22"><path d="M15 1.5 L18 3.5 L9.5 17.5 L7 18.5 L6.8 16Z" fill="none" stroke="#fff" stroke-width="1.2"/><path d="M7.5 13c-4 0-6 2-5.5 4.5 0.5 2.5 4 2.5 5.5 0.5M15.5 6c2.5 0 4.5 0.5 5 1.5-0.5 1-2 1.5-3.5 1" fill="none" stroke="#fff" stroke-width="1.2"/></svg>
<div class="t" style="left:1811.0px;top:1054.00px;font-size:15.38px;color:#fff;transform:scaleX(0.9091);transform-origin:0 0;z-index:11">21:55</div>
<svg class="i" style="left:1869px;top:1050px;z-index:11" width="21" height="22" viewBox="0 0 21 22"><path d="M0 0h21v16h-8l-2.5 3-2.5-3h-8z" fill="#fff"/><path d="M4 4h13M4 7.5h13M4 11h9" stroke="#333" stroke-width="1.2"/></svg>
</body></html>
